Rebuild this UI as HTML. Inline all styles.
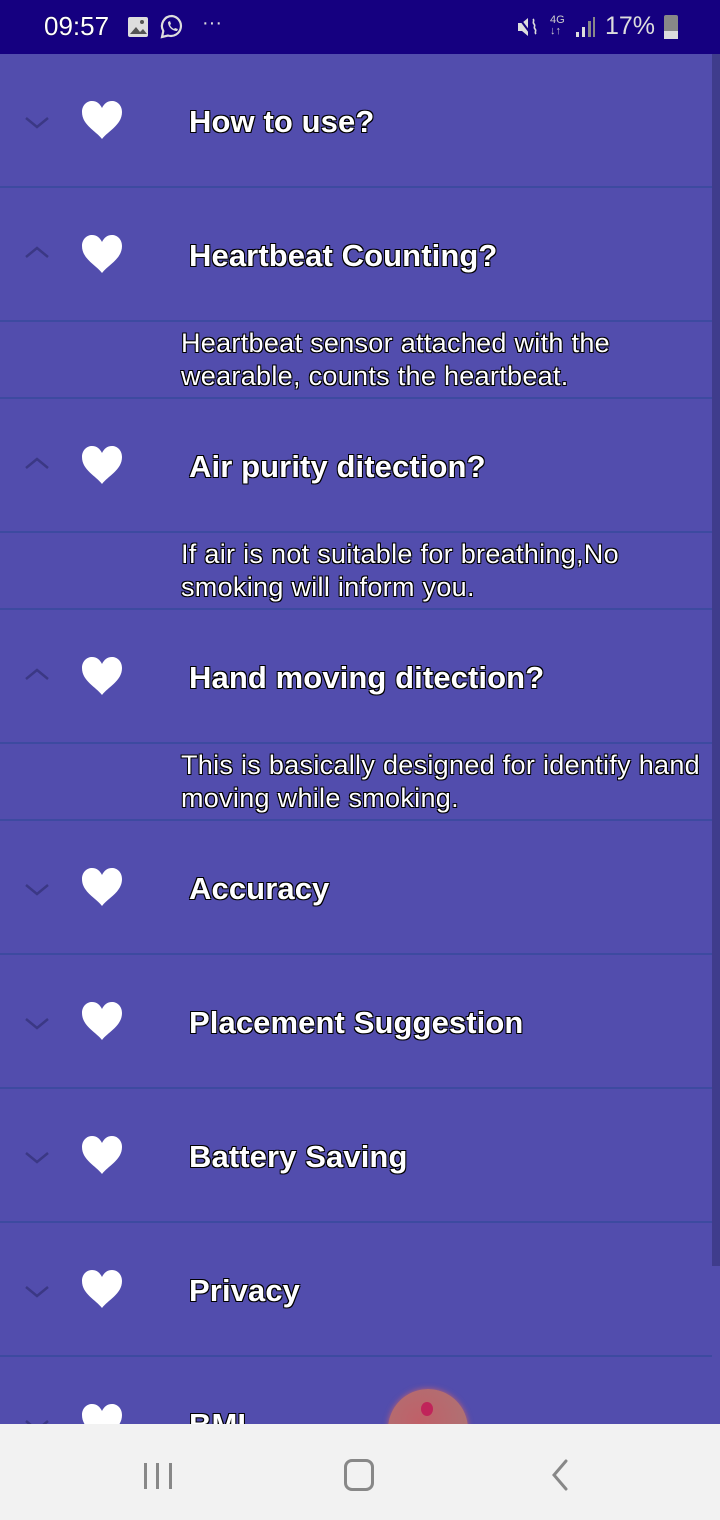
<!DOCTYPE html>
<html><head><meta charset="utf-8"><style>
*{margin:0;padding:0;box-sizing:border-box}
body{width:720px;height:1520px;overflow:hidden;background:#524dad;font-family:"Liberation Sans",sans-serif;position:relative}
.sb{position:absolute;left:0;top:0;width:720px;height:54px;background:#150080;color:#fff}
.t{position:absolute;color:#fff;white-space:nowrap;text-shadow:-1px -1px 0 #000,1px -1px 0 #000,-1px 1px 0 #000,1px 1px 0 #000}
.q{font-weight:bold;font-size:31px;left:189px;letter-spacing:0.1px}
.a{font-size:27px;left:181px;line-height:33px;letter-spacing:0.3px}
.hr{position:absolute;left:0;width:712px;height:2px;background:#3d4aa0}
.heart{position:absolute;left:82px;width:40px;height:38px}
.chev{position:absolute;left:24px;width:26px;height:14px}
.nav{position:absolute;left:0;top:1424px;width:720px;height:96px;background:#f2f2f2}
</style></head><body>
<div class="sb">
<div style="position:absolute;left:44px;top:11px;font-size:26px;text-shadow:0 0 1px #000">09:57</div>
<svg style="position:absolute;left:127px;top:16px" width="22" height="22" viewBox="0 0 22 22"><rect x="1" y="1" width="20" height="20" rx="2" fill="#ddd"/><path d="M3 18l6-7 4 5 3-3 4 5z" fill="#555"/><circle cx="15" cy="6" r="2" fill="#555"/></svg>
<svg style="position:absolute;left:158px;top:13px" width="28" height="28" viewBox="0 0 28 28"><path d="M14 3a10 10 0 0 0-8.7 15L4 24l6-1.5A10 10 0 1 0 14 3z" fill="none" stroke="#ddd" stroke-width="2.2"/><path d="M10 9c0 5 4 9 9 9l1-2-3-1-1 1c-2-1-3-2-4-4l1-1-1-3z" fill="#ddd"/></svg>
<div style="position:absolute;left:202px;top:12px;font-size:20px;color:#ddd">···</div>
<svg style="position:absolute;left:516px;top:16px" width="24" height="22" viewBox="0 0 24 22"><path d="M2 7h4l6-5v18l-6-5H2z" fill="#ddd"/><path d="M3 2l12 16" stroke="#150080" stroke-width="2"/><path d="M17 3c2 2-1 3 1 5s-1 3 1 5-1 3 1 5" fill="none" stroke="#ddd" stroke-width="1.6"/></svg>
<div style="position:absolute;left:550px;top:15px;font-size:11px;color:#ccc;line-height:11px">4G<br>↓↑</div>
<svg style="position:absolute;left:574px;top:17px" width="22" height="22"><rect x="2" y="15" width="3" height="5" fill="#ddd"/><rect x="8" y="10" width="3" height="10" fill="#ddd"/><rect x="14" y="4" width="3" height="16" fill="#888"/><rect x="19" y="0" width="2" height="20" fill="#888"/></svg>
<div style="position:absolute;left:605px;top:12px;font-size:25px;color:#ddd">17%</div>
<div style="position:absolute;left:664px;top:15px;width:14px;height:24px;background:#888;border-radius:2px"><div style="position:absolute;bottom:0;width:14px;height:8px;background:#ddd"></div></div>
</div>
<div style="position:absolute;left:712px;top:54px;width:8px;height:1212px;background:#3f3c8c"></div>

<div class="t q" style="top:104px">How to use?</div>
<div class="hr" style="top:186px"></div>
<div class="t q" style="top:238px">Heartbeat Counting?</div>
<div class="hr" style="top:320px"></div>
<div class="t a" style="top:327px">Heartbeat sensor attached with the<br>wearable, counts the heartbeat.</div>
<div class="hr" style="top:397px"></div>
<div class="t q" style="top:449px">Air purity ditection?</div>
<div class="hr" style="top:531px"></div>
<div class="t a" style="top:538px">If air is not suitable for breathing,No<br>smoking will inform you.</div>
<div class="hr" style="top:608px"></div>
<div class="t q" style="top:660px">Hand moving ditection?</div>
<div class="hr" style="top:742px"></div>
<div class="t a" style="top:749px">This is basically designed for identify hand<br>moving while smoking.</div>
<div class="hr" style="top:819px"></div>
<div class="t q" style="top:871px">Accuracy</div>
<div class="hr" style="top:953px"></div>
<div class="t q" style="top:1005px">Placement Suggestion</div>
<div class="hr" style="top:1087px"></div>
<div class="t q" style="top:1139px">Battery Saving</div>
<div class="hr" style="top:1221px"></div>
<div class="t q" style="top:1273px">Privacy</div>
<div class="hr" style="top:1355px"></div>
<div class="t q" style="top:1407px">BMI</div>

<svg width="0" height="0" style="position:absolute"><defs>
<symbol id="h" viewBox="0 0 40 38"><path d="M20 38C14 30 0 24 0 11 0 4 5 0 10 0c5 0 8 3 10 7 2-4 5-7 10-7 5 0 10 4 10 11 0 13-14 19-20 27z" fill="#fff"/></symbol>
<symbol id="d" viewBox="0 0 26 14"><path d="M2 3l11 9 11-9" fill="none" stroke="#3b3885" stroke-width="2.5"/></symbol>
<symbol id="u" viewBox="0 0 26 14"><path d="M2 11l11-9 11 9" fill="none" stroke="#3b3885" stroke-width="2.5"/></symbol>
</defs></svg>
<svg class="heart" style="top:101px"><use href="#h"/></svg>
<svg class="heart" style="top:235px"><use href="#h"/></svg>
<svg class="heart" style="top:446px"><use href="#h"/></svg>
<svg class="heart" style="top:657px"><use href="#h"/></svg>
<svg class="heart" style="top:868px"><use href="#h"/></svg>
<svg class="heart" style="top:1002px"><use href="#h"/></svg>
<svg class="heart" style="top:1136px"><use href="#h"/></svg>
<svg class="heart" style="top:1270px"><use href="#h"/></svg>
<svg class="heart" style="top:1404px"><use href="#h"/></svg>
<svg class="chev" style="top:115px"><use href="#d"/></svg>
<svg class="chev" style="top:246px"><use href="#u"/></svg>
<svg class="chev" style="top:457px"><use href="#u"/></svg>
<svg class="chev" style="top:668px"><use href="#u"/></svg>
<svg class="chev" style="top:882px"><use href="#d"/></svg>
<svg class="chev" style="top:1016px"><use href="#d"/></svg>
<svg class="chev" style="top:1150px"><use href="#d"/></svg>
<svg class="chev" style="top:1284px"><use href="#d"/></svg>
<svg class="chev" style="top:1418px"><use href="#d"/></svg>
<div style="position:absolute;left:388px;top:1389px;width:80px;height:80px;border-radius:50%;background:radial-gradient(circle at 40% 40%,#c06068,#a87878);box-shadow:0 0 6px #c06070"></div>
<div style="position:absolute;left:421px;top:1402px;width:12px;height:14px;border-radius:50%;background:#c0245a"></div>

<div class="nav">
<div style="position:absolute;left:144px;top:39px;width:3px;height:26px;background:#888"></div>
<div style="position:absolute;left:156px;top:39px;width:3px;height:26px;background:#888"></div>
<div style="position:absolute;left:169px;top:39px;width:3px;height:26px;background:#888"></div>
<div style="position:absolute;left:344px;top:35px;width:30px;height:32px;border:3px solid #888;border-radius:8px"></div>
<svg style="position:absolute;left:548px;top:34px" width="24" height="34"><path d="M18 3L6 17l12 14" fill="none" stroke="#888" stroke-width="3" stroke-linecap="round"/></svg>
</div>
</body></html>
